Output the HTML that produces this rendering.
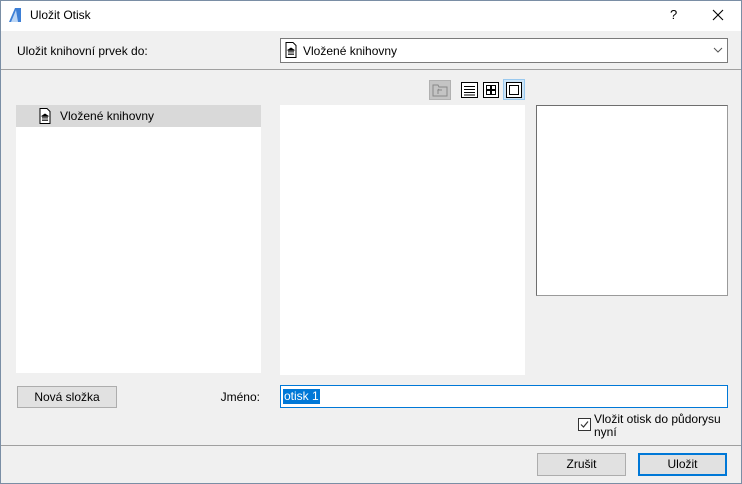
<!DOCTYPE html><html><head><meta charset="utf-8"><style>
*{box-sizing:border-box}body{margin:0;width:742px;height:484px;overflow:hidden;background:#f0f0f0;font-family:"Liberation Sans",sans-serif;font-size:12px;color:#000;position:relative}
.a{position:absolute}
.btn{position:absolute;background:#e1e1e1;border:1px solid #adadad;text-align:center;line-height:20px}
</style></head><body>
<div class="a" style="left:0;top:0;width:742px;height:484px;border:1px solid #7a8ea5;border-top:1px solid #7a8ea5"></div>
<div class="a" style="left:1px;top:1px;width:740px;height:30px;background:#fff"></div>
<svg class="a" style="left:8px;top:7px" width="14" height="16"><path d="M1 15 L7 1 L13 1 L13 15 Z" fill="#3d7fd6"/><path d="M3 15 L8 3 L10 15Z" fill="#bcd6f5"/></svg>
<div class="a" style="left:30px;top:8px;font-size:12px">Uložit Otisk</div>
<div class="a" style="left:670px;top:7px;font-size:13px">?</div>
<svg class="a" style="left:712px;top:9px" width="12" height="12"><path d="M1 1L11 11M11 1L1 11" stroke="#000" stroke-width="1.1"/></svg>
<div class="a" style="left:17px;top:44px">Uložit knihovní prvek do:</div>
<div class="a" style="left:280px;top:38px;width:448px;height:25px;background:#fff;border:1px solid #7a7a7a"></div>
<svg class="a" style="left:285px;top:42px" width="12" height="16"><path d="M1 .5H8L11 3.5V15.5H1Z" fill="#fff" stroke="#000"/><path d="M3 8L6 6 9 8ZM3 9h6M4 9v3M6 9v3M8 9v3M3 12.5h6" stroke="#000" fill="#000" stroke-width=".8"/></svg>
<div class="a" style="left:303px;top:44px">Vložené knihovny</div>
<svg class="a" style="left:713px;top:47px" width="10" height="6"><path d="M1 1L5 5 9 1" stroke="#555" fill="none"/></svg>
<div class="a" style="left:1px;top:69px;width:740px;height:1px;background:#a0a0a0"></div>
<div class="a" style="left:429px;top:80px;width:22px;height:20px;background:#c4c4c4;border:1px solid #b0b0b0"></div>
<svg class="a" style="left:432px;top:83px" width="16" height="14"><path d="M1 2h5l1 2h8v9H1Z" fill="none" stroke="#888"/><path d="M6 11V7h4M7 6L5.5 7.5" stroke="#888" fill="none"/></svg>
<svg class="a" style="left:461px;top:82px" width="18" height="16"><rect x=".5" y=".5" width="16" height="15" fill="#fff" stroke="#000"/><path d="M3 4.5h11M3 7.5h11M3 10.5h11M3 13h11" stroke="#000"/></svg>
<svg class="a" style="left:483px;top:82px" width="17" height="16"><rect x=".5" y=".5" width="15" height="15" fill="#fff" stroke="#000"/><rect x="3.5" y="3.5" width="4" height="4" fill="none" stroke="#000"/><rect x="8.5" y="3.5" width="4" height="4" fill="none" stroke="#000"/><rect x="3.5" y="8.5" width="4" height="4" fill="none" stroke="#000"/><rect x="8.5" y="8.5" width="4" height="4" fill="none" stroke="#000"/></svg>
<div class="a" style="left:503px;top:79px;width:22px;height:21px;background:#cce4f7;border:1px solid #99c9ef"></div>
<svg class="a" style="left:506px;top:82px" width="16" height="16"><rect x=".5" y=".5" width="15" height="15" fill="#fff" stroke="#000"/><rect x="3.5" y="3.5" width="9" height="9" fill="none" stroke="#000"/></svg>
<div class="a" style="left:16px;top:105px;width:245px;height:268px;background:#fff"></div>
<div class="a" style="left:16px;top:105px;width:245px;height:22px;background:#d9d9d9"></div>
<svg class="a" style="left:39px;top:108px" width="12" height="16"><path d="M1 .5H8L11 3.5V15.5H1Z" fill="#fff" stroke="#000"/><path d="M3 8L6 6 9 8ZM3 9h6M4 9v3M6 9v3M8 9v3M3 12.5h6" stroke="#000" fill="#000" stroke-width=".8"/></svg>
<div class="a" style="left:60px;top:109px">Vložené knihovny</div>
<div class="a" style="left:280px;top:105px;width:245px;height:270px;background:#fff"></div>
<div class="a" style="left:536px;top:105px;width:192px;height:191px;background:#fff;border:1px solid #9a9a9a;border-top-color:#6e6e6e;border-left-color:#6e6e6e"></div>
<div class="btn" style="left:17px;top:386px;width:100px;height:22px">Nová složka</div>
<div class="a" style="left:180px;top:390px;width:80px;text-align:right">Jméno:</div>
<div class="a" style="left:280px;top:385px;width:448px;height:23px;background:#fff;border:1px solid #0078d7"></div>
<div class="a" style="left:283px;top:389px;background:#0078d7;color:#fff;padding:0 1px;line-height:15px">otisk 1</div>
<div class="a" style="left:578px;top:418px;width:13px;height:13px;border:1px solid #333;background:#fff"></div>
<svg class="a" style="left:579px;top:419px" width="11" height="11"><path d="M2 5.5L4.5 8 9 2.5" stroke="#333" fill="none" stroke-width="1.2"/></svg>
<div class="a" style="left:594px;top:413px;line-height:13px">Vložit otisk do půdorysu<br>nyní</div>
<div class="a" style="left:1px;top:445px;width:740px;height:1px;background:#a0a0a0"></div>
<div class="btn" style="left:537px;top:453px;width:89px;height:23px">Zrušit</div>
<div class="btn" style="left:638px;top:453px;width:89px;height:23px;border:2px solid #0078d7;line-height:19px">Uložit</div>
</body></html>
